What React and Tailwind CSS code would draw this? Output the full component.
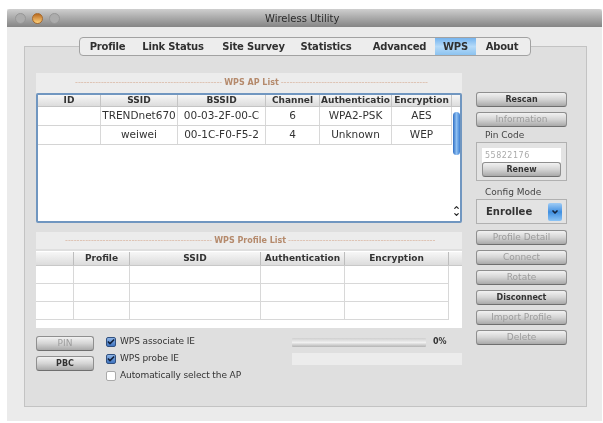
import { Check, ChevronDown, ChevronUp } from 'lucide-react'

const tabs = [
  ['Profile', 'w-[39px]'],
  ['Link Status', 'w-[92px]'],
  ['Site Survey', 'w-[69px]'],
  ['Statistics', 'w-[76px]'],
  ['Advanced', 'w-[71px]'],
  ['WPS', 'w-[41px] bg-gradient-to-b from-[#75b4ee] via-[#b5daf8] to-[#8cc3f0]'],
  ['About', 'w-[52px]'],
]

const apCols = [
  ['ID', 'w-[63px]'],
  ['SSID', 'w-[77px]'],
  ['BSSID', 'w-[88px]'],
  ['Channel', 'w-[54px]'],
  ['Authenticatio', 'w-[72px]'],
  ['Encryption', 'w-[60px]'],
]

const apRows = [
  ['', 'TRENDnet670', '00-03-2F-00-C', '6', 'WPA2-PSK', 'AES'],
  ['', 'weiwei', '00-1C-F0-F5-2', '4', 'Unknown', 'WEP'],
]

const profileCols = [
  ['', 'w-[38px]'],
  ['Profile', 'w-[56px]'],
  ['SSID', 'w-[131px]'],
  ['Authentication', 'w-[84px]'],
  ['Encryption', 'w-[104px]'],
]

const dashes = '---------------------------------------------------'

function Btn({ children, disabled, className = 'w-[91px]' }) {
  return (
    <div className={`${className} h-[15px] flex items-center justify-center rounded-[3px] border border-[#8f8f8f] border-b-[#6f6f6f] bg-gradient-to-b from-[#f2f2f2] via-[#d4d4d4] to-[#a9a9a9] ${disabled ? 'text-[9px] text-[#9c9c9c]' : 'text-[8px] font-bold text-[#333]'}`}>
      {children}
    </div>
  )
}

function Strip({ label, className }) {
  return (
    <div className={`${className} flex items-center gap-[2px] bg-[#ececec] text-[8px] whitespace-nowrap text-[#b58a6c]`}>
      <span className="text-[#d9b5a0]">{dashes}</span>
      <span className="font-semibold">{label}</span>
      <span className="text-[#d9b5a0]">{dashes}</span>
    </div>
  )
}

function CheckRow({ label, checked }) {
  return (
    <div className="flex items-center gap-[4px] h-[17px] text-[9px] tracking-[-0.1px] text-[#333]">
      <div className={`w-[10px] h-[10px] rounded-[2px] border flex items-center justify-center ${checked ? 'border-[#31507f] bg-gradient-to-b from-[#8db4e6] to-[#3f74c0]' : 'border-[#aaa] bg-white'}`}>
        {checked && <Check className="w-[12px] h-[12px] text-[#10213d]" strokeWidth={5} />}
      </div>
      {label}
    </div>
  )
}

export default function App() {
  return (
    <div className="w-[603px] h-[423px] bg-white pl-[7px] pt-[9px] overflow-hidden font-['DejaVu_Sans',sans-serif] blur-[0.5px]">
      <div className="w-[595px] h-[412px] bg-[#ebebeb] flex flex-col">
        {/* title bar */}
        <div className="relative h-[18px] shrink-0 flex items-center gap-[6px] pl-[8px] bg-gradient-to-b from-[#cfcfcf] to-[#858585] rounded-t-[3px]">
          <span className="w-[11px] h-[11px] rounded-full bg-[#acacac] border border-[#979797]" />
          <span className="w-[11px] h-[11px] rounded-full bg-gradient-to-b from-[#b86a1e] to-[#ffd27a] border border-[#a86a2c]" />
          <span className="w-[11px] h-[11px] rounded-full bg-[#acacac] border border-[#979797]" />
          <span className="absolute left-[258px] text-[10px] text-[#2a2a2a]">Wireless Utility</span>
        </div>

        {/* tab panel */}
        <div className="ml-[17px] mt-[19px] w-[563px] h-[361px] bg-[#dfdfdf] border border-[#c3c3c3] flex flex-col">
          <div className="-mt-[10px] ml-[54px] w-[452px] h-[19px] flex items-stretch shrink-0 rounded-[4px] border border-[#a2a2a2] bg-[#ededed] text-[10px] tracking-[-0.2px] font-bold text-[#303030] overflow-hidden">
            <div className="w-[8px]" />
            {tabs.map(([name, cls]) => (
              <div key={name} className={`${cls} flex items-center justify-center whitespace-nowrap`}>{name}</div>
            ))}
          </div>

          <div className="flex pl-[11px] pt-[17px]">
            {/* left column */}
            <div className="w-[426px] flex flex-col">
              <Strip className="h-[20px] pl-[39px]" label="WPS AP List" />

              {/* AP table */}
              <div className="h-[130px] bg-white border-2 border-[#7096c0] rounded-[2px] flex">
                <div className="w-[414px] text-[10.5px] text-[#333]">
                  <div className="flex h-[12px] bg-gradient-to-b from-[#f7f7f7] to-[#dcdcdc] border-b border-[#c4c4c4] text-[9px] font-bold text-[#333]">
                    {apCols.map(([name, w]) => (
                      <div key={name} className={`${w} flex items-center justify-center border-r border-[#c4c4c4] whitespace-nowrap`}>{name}</div>
                    ))}
                  </div>
                  {apRows.map(row => (
                    <div key={row[1]} className="flex h-[19px] border-b border-[#d4d4d4]">
                      {row.map((cell, i) => (
                        <div key={i} className={`${apCols[i][1]} flex items-center justify-center border-r border-[#d8d8d8] whitespace-nowrap`}>{cell}</div>
                      ))}
                    </div>
                  ))}
                </div>
                <div className="flex-1 flex flex-col items-center pb-[3px]">
                  <div className="w-full h-[12px] shrink-0 bg-gradient-to-b from-[#f7f7f7] to-[#dcdcdc] border-b border-[#c4c4c4]" />
                  <div className="mt-[5px] w-[7px] h-[43px] rounded-full bg-gradient-to-r from-[#2f6fc4] via-[#8fc0f2] to-[#3c7fd2]" />
                  <div className="flex-1" />
                  <ChevronUp className="w-[7px] h-[7px] text-[#222]" strokeWidth={4} />
                  <ChevronDown className="w-[7px] h-[7px] text-[#222]" strokeWidth={4} />
                </div>
              </div>

              <Strip className="h-[17px] mt-[9px] pl-[29px]" label="WPS Profile List" />

              {/* profile table */}
              <div className="mt-[2px] h-[77px] bg-white flex flex-col">
                <div className="flex h-[14px] mt-[1px] shrink-0 bg-gradient-to-b from-[#f7f7f7] to-[#dcdcdc] border-b border-[#c8c8c8] text-[9px] font-bold text-[#333]">
                  {profileCols.map(([name, w], i) => (
                    <div key={i} className={`${w} flex items-center justify-center border-r border-[#bdbdbd]`}>{name}</div>
                  ))}
                </div>
                {[0, 1, 2].map(r => (
                  <div key={r} className="flex h-[18px] w-[413px] border-b border-[#d8d8d8]">
                    {profileCols.map(([name, w], i) => (
                      <div key={i} className={`${w} border-r border-[#d8d8d8]`} />
                    ))}
                  </div>
                ))}
              </div>

              {/* bottom controls */}
              <div className="flex mt-[8px]">
                <div className="w-[58px] flex flex-col gap-[5px]">
                  <Btn disabled className="w-[58px]">PIN</Btn>
                  <Btn className="w-[58px]">PBC</Btn>
                </div>
                <div className="ml-[12px] -mt-[3px] w-[186px] flex flex-col">
                  <CheckRow label="WPS associate IE" checked />
                  <CheckRow label="WPS probe IE" checked />
                  <CheckRow label="Automatically select the AP" />
                </div>
                <div className="flex-1 flex flex-col pt-[1px]">
                  <div className="flex items-center gap-[7px] h-[10px]">
                    <div className="w-[134px] h-[9px] rounded-[1px] bg-gradient-to-b from-[#cfcfcf] via-[#f0f0f0] to-[#b4b4b4]" />
                    <span className="text-[8px] font-semibold text-[#333]">0%</span>
                  </div>
                  <div className="mt-[6px] h-[12px] bg-[#ececec]" />
                </div>
              </div>
            </div>

            {/* right column */}
            <div className="ml-[14px] w-[91px] flex flex-col pt-[19px]">
              <Btn>Rescan</Btn>
              <div className="mt-[5px]"><Btn disabled>Information</Btn></div>

              <div className="mt-[2px] text-[9px] text-[#444] h-[13px] pl-[9px]">Pin Code</div>
              <div className="h-[39px] border border-[#b0b0b0] bg-[#e3e3e3] px-[5px] pt-[5px] flex flex-col">
                <div className="h-[15px] shrink-0 bg-white text-[8px] text-[#aaa] pl-[3px] flex items-center tracking-[0.5px]">55822176</div>
                <Btn className="w-[79px] -mt-[1px]">Renew</Btn>
              </div>

              <div className="mt-[5px] text-[9px] text-[#444] h-[13px] pl-[9px]">Config Mode</div>
              <div className="h-[25px] border border-[#b0b0b0] bg-[#e3e3e3] pl-[9px] pr-[4px] flex items-center justify-between">
                <span className="text-[10px] font-bold text-[#333]">Enrollee</span>
                <div className="w-[14px] h-[18px] rounded-[2px] bg-gradient-to-b from-[#9fccf5] via-[#3f8fe0] to-[#8cc4f5] flex items-center justify-center">
                  <ChevronDown className="w-[8px] h-[8px] text-[#14233c]" strokeWidth={5} />
                </div>
              </div>

              <div className="mt-[6px] flex flex-col gap-[5px]">
                <Btn disabled>Profile Detail</Btn>
                <Btn disabled>Connect</Btn>
                <Btn disabled>Rotate</Btn>
                <Btn>Disconnect</Btn>
                <Btn disabled>Import Profile</Btn>
                <Btn disabled>Delete</Btn>
              </div>
            </div>
          </div>
        </div>
      </div>
    </div>
  )
}
